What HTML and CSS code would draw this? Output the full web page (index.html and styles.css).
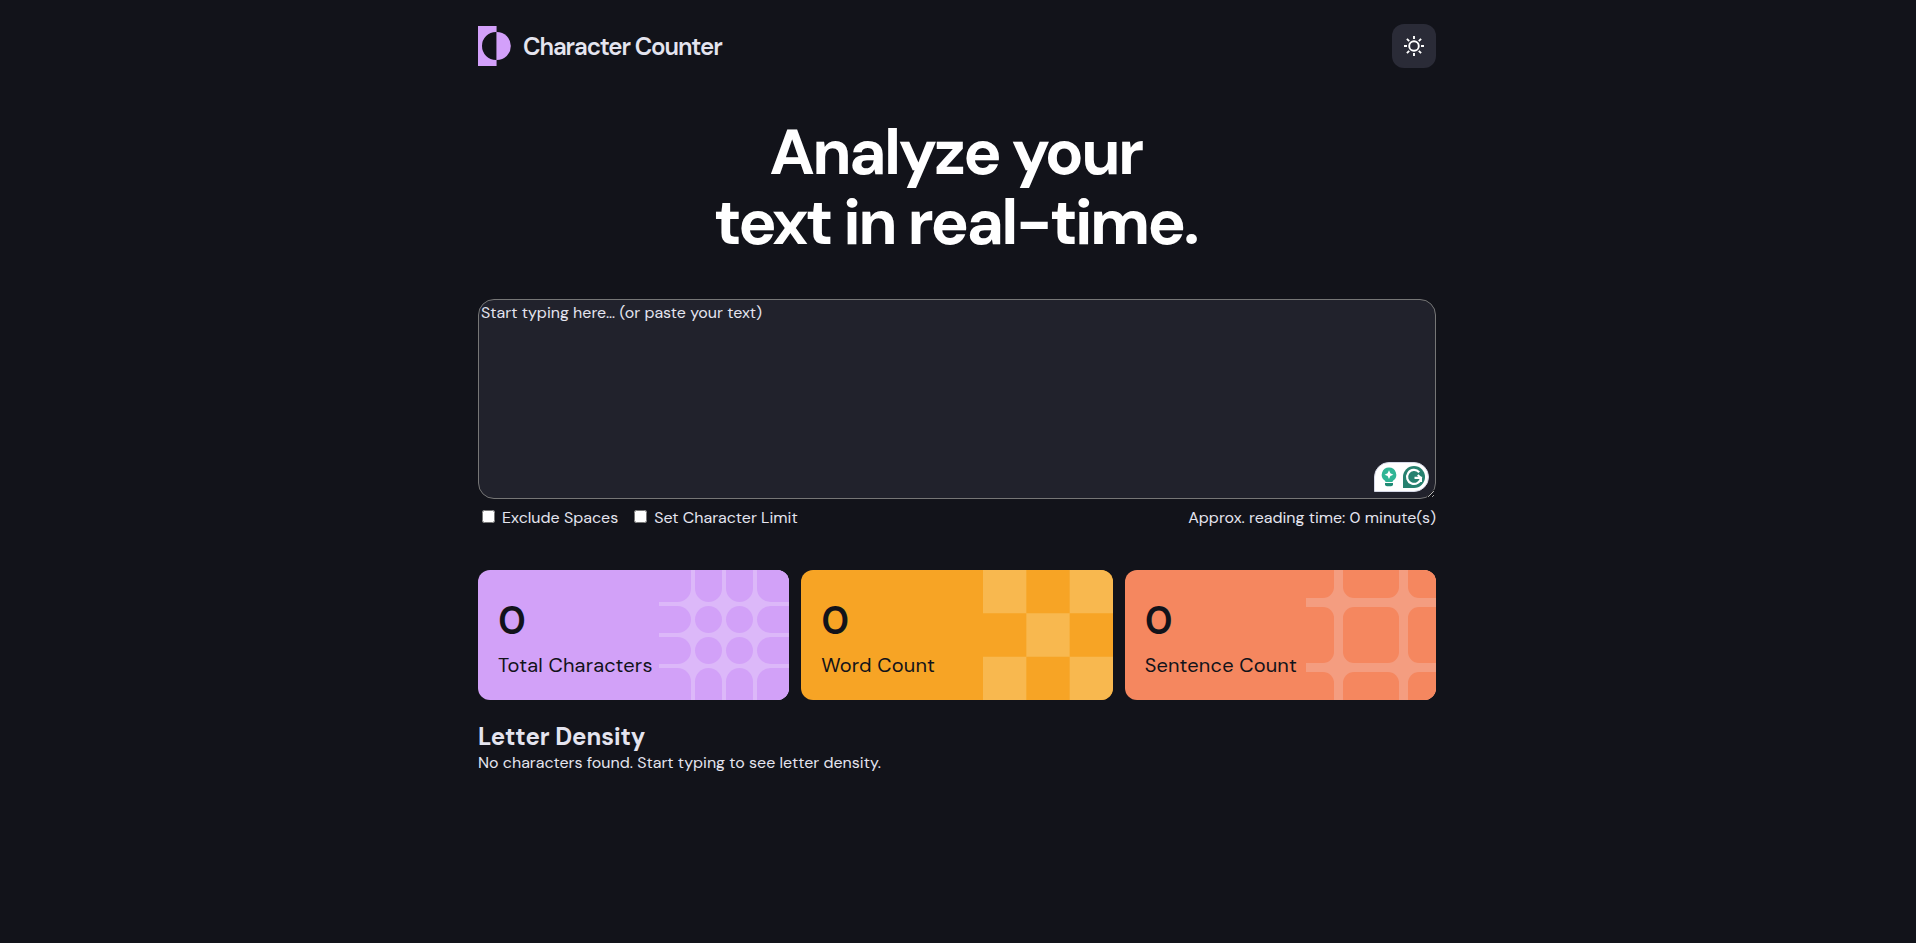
FILE: index.html
```
<!DOCTYPE html>
<html lang="en">
<head>
<meta charset="utf-8">
<title>Character Counter</title>
<link rel="stylesheet" href="styles.css">
</head>
<body>
<div class="container">
  <header class="header">
    <div class="brand">
      <svg class="brand-mark" width="33" height="40" viewBox="0 0 33 40">
        <path fill="#d3a0fa" d="M0 0h18v6a14 14 0 0 0 0 28v6H0z"/>
        <path fill="#d3a0fa" d="M18.800 6a14 14 0 0 1 0 28z"/>
        <path fill="#7f6597" d="M18 0h1v40h-1z"/>
      </svg>
      <span class="brand-name">Character Counter</span>
    </div>
    <button class="theme-toggle" aria-label="Toggle theme">
      <svg width="22" height="22" viewBox="0 0 22 22" fill="none" stroke="#fff" stroke-width="1.9">
        <circle cx="11" cy="11" r="4.8"/>
        <path d="M11 1v3M11 18v3M1 11h3M18 11h3M3.900 3.900l2.300 2.300M15.800 15.800l2.300 2.300M3.900 18.100l2.300-2.300M15.800 6.200l2.300-2.300"/>
      </svg>
    </button>
  </header>

  <h1 class="title">Analyze your<br>text in real-time.</h1>

  <div class="editor">
    <textarea class="editor-input" placeholder="Start typing here… (or paste your text)"></textarea>
    <div class="assistant">
      <svg width="55" height="30" viewBox="0 0 55 30">
        <path fill="#fff" stroke="#d5d8e6" d="M.5 29.500V15A14.500 14.500 0 0 1 15 .5H40a14.500 14.500 0 0 1 0 29z"/>
        <path fill="#2fb595" d="M15 5.500a7.200 7.200 0 0 1 4.300 13c-.6.500-.8 1-.8 1.500h-7c0-.5-.2-1-.8-1.500A7.200 7.200 0 0 1 15 5.500z"/>
        <path fill="#1f8a74" d="M11 21h8v1.200a2 2 0 0 1-2 2h-4a2 2 0 0 1-2-2z"/>
        <path fill="#fff" d="M15 8.300l1.400 3 3 1.400-3 1.400-1.400 3-1.400-3-3-1.400 3-1.400z"/>
        <path fill="#26816f" d="M29 26V15a11 11 0 1 1 11 11z"/>
        <path fill="none" stroke="#fff" stroke-width="2.200" d="M45.200 10.200A7 7 0 1 0 47 15.800H40.500"/>
        <path fill="none" stroke="#fff" stroke-width="2" d="M43.700 12.900L47 16v4"/>
      </svg>
    </div>
  </div>

  <div class="options">
    <label class="option"><input type="checkbox" class="check">Exclude Spaces</label>
    <label class="option"><input type="checkbox" class="check">Set Character Limit</label>
    <span class="reading-time">Approx. reading time: 0 minute(s)</span>
  </div>

  <div class="cards">
    <div class="card card-purple">
      <div class="card-value">0</div>
      <div class="card-label">Total Characters</div>
      <svg class="pattern" viewBox="0 0 130 130">
        <defs>
          <g id="pills">
            <rect x="-30" width="62" height="27" rx="13.500"/>
            <rect x="36" width="27" height="27" rx="13.500"/>
            <rect x="67" width="27" height="27" rx="13.500"/>
            <rect x="98" width="62" height="27" rx="13.500"/>
          </g>
          <g id="pills-tall">
            <rect x="-30" width="62" height="62" rx="13.500"/>
            <rect x="36" width="27" height="62" rx="13.500"/>
            <rect x="67" width="27" height="62" rx="13.500"/>
            <rect x="98" width="62" height="62" rx="13.500"/>
          </g>
        </defs>
        <rect width="130" height="130" fill="#dcb8f9"/>
        <g fill="#d2a1f8">
          <use href="#pills-tall" y="-30"/>
          <use href="#pills" y="36"/>
          <use href="#pills" y="67"/>
          <use href="#pills-tall" y="98"/>
        </g>
      </svg>
    </div>
    <div class="card card-yellow">
      <div class="card-value">0</div>
      <div class="card-label">Word Count</div>
      <svg class="pattern" viewBox="0 0 3 3" fill="#f8b84f">
        <path d="M0 0h1v1H0zM2 0h1v1H2zM1 1h1v1H1zM0 2h1v1H0zM2 2h1v1H2z"/>
      </svg>
    </div>
    <div class="card card-orange">
      <div class="card-value">0</div>
      <div class="card-label">Sentence Count</div>
      <svg class="pattern" viewBox="0 0 130 130">
        <defs>
          <g id="tiles">
            <rect x="-28" width="56" height="56" rx="11"/>
            <rect x="37" width="56" height="56" rx="11"/>
            <rect x="102" width="56" height="56" rx="11"/>
          </g>
        </defs>
        <rect width="130" height="130" fill="#f49d80"/>
        <g fill="#f5875f">
          <use href="#tiles" y="-28"/>
          <use href="#tiles" y="37"/>
          <use href="#tiles" y="102"/>
        </g>
      </svg>
    </div>
  </div>

  <section class="density">
    <h2 class="density-title">Letter Density</h2>
    <p class="density-empty">No characters found. Start typing to see letter density.</p>
  </section>
</div>
</body>
</html>
```
FILE: styles.css
```
* { box-sizing: border-box; margin: 0; padding: 0; }
body {
  min-height: 100vh;
  background: #12131a;
  color: #e4e4ef;
  font-family: "DM Sans", Inter, sans-serif;
  font-size: 16px;
  line-height: 21px;
}
.container { width: 960px; margin: 0 auto; padding: 24px 2px 0 0; }
.header { display: flex; justify-content: space-between; align-items: center; height: 44px; }
.brand { display: flex; align-items: center; gap: 12px; }
.brand-mark { display: block; }
.brand-name { font-size: 24px; font-weight: 600; line-height: 31px; letter-spacing: -1.1px; }
.theme-toggle {
  display: flex; align-items: center; justify-content: center;
  width: 44px; height: 44px; border: 0; border-radius: 12px; background: #2a2b37;
}
.title {
  margin-top: 50px; padding-right: 3px; text-align: center; color: #fff;
  font-size: 64px; font-weight: 700; line-height: 70px; letter-spacing: -2.63px;
}
.editor { position: relative; margin-top: 41px; }
.editor-input {
  display: block; width: 100%; height: 200px; padding: 2px;
  border: 1px solid #767676; border-radius: 16px; background: #21222c;
  color: #e4e4ef; font: inherit; resize: vertical;
}
.editor-input::placeholder { color: #e4e4ef; }
.assistant { position: absolute; right: 7px; bottom: 7px; height: 30px; }
.options { display: flex; margin-top: 8px; padding-left: 4px; }
.option { display: flex; align-items: flex-start; margin-right: 16px; }
.check { width: 13px; height: 13px; margin: 3px 7px 0 0; }
.reading-time { margin-left: auto; }
.cards { display: grid; grid-template-columns: repeat(3, 1fr); gap: 12px; margin-top: 42px; }
.card {
  position: relative; overflow: hidden; height: 130px; padding: 24px 20px;
  border-radius: 12px; color: #12131a;
}
.card-purple { background: #d2a1f8; }
.card-yellow { background: #f7a425; }
.card-orange { background: #f5875f; }
.card-value { font-size: 40px; font-weight: 600; line-height: 52px; }
.card-label { margin-top: 6px; font-size: 20px; line-height: 26px; letter-spacing: 0.17px; }
.pattern { position: absolute; top: 0; right: 0; width: 130px; height: 130px; }
.density { margin-top: 21px; }
.density-title { font-size: 24px; font-weight: 700; line-height: 31px; letter-spacing: -0.05px; }
```
